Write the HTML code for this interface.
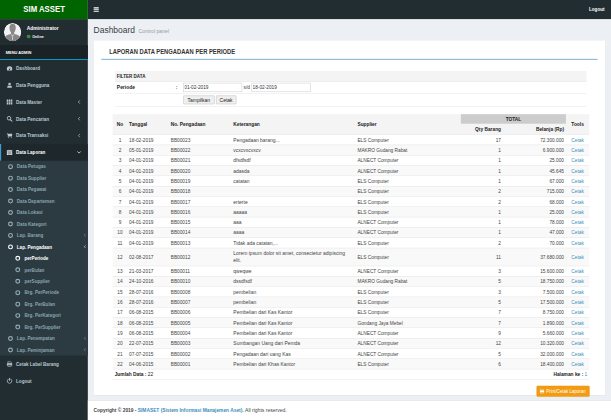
<!DOCTYPE html>
<html><head><meta charset="utf-8">
<style>
*{box-sizing:border-box;}
html,body{margin:0;padding:0;width:611px;height:420px;overflow:hidden;background:#ecf0f5;}
body{font-family:"Liberation Sans",sans-serif;}
#wrap{position:absolute;left:0;top:0;width:1600px;height:1100px;transform:scale(0.381875);transform-origin:0 0;background:#ecf0f5;font-size:12.6px;color:#333;overflow:hidden;}
#logo{position:absolute;left:0;top:0;width:230px;height:50px;background:#006400;color:#fff;font-weight:bold;font-size:22.6px;line-height:50px;text-align:center;}
#logo span{display:inline-block;transform:scaleX(0.9)}
#nav{position:absolute;left:230px;top:0;right:0;height:50px;background:#222d32;}
#burger{position:absolute;left:15px;top:19.3px;width:13.5px;height:12px;}
#burger i{display:block;height:2.3px;background:#fff;margin-bottom:2.2px;border-radius:1px}
#logout{position:absolute;right:17px;top:0;line-height:50px;color:#fff;font-size:12px;font-weight:bold;}
#side{position:absolute;left:0;top:50px;width:230px;bottom:0;background:#222d32;}
#avatar{position:absolute;left:10px;top:10px;width:46px;height:48px;border-radius:50%;overflow:hidden;}
#uname{position:absolute;left:70px;top:17px;color:#fff;font-weight:bold;font-size:12.75px;}
#online{position:absolute;left:70px;top:40px;color:#fff;font-size:9.6px;font-weight:bold}
#online b{display:inline-block;width:9.5px;height:9.5px;border-radius:50%;background:#3c8c3c;margin-right:5px;vertical-align:-1px}
#mhead{position:absolute;left:0;top:68px;width:230px;height:38.8px;background:#1a2226;color:#fff;font-size:10.4px;font-weight:bold;padding:14px 0 0 15px;border-bottom:2.2px solid #00c0ef;}
ul{list-style:none;margin:0;padding:0}
.menu{position:absolute;left:0;width:230px;}
.menu>li{height:44px;line-height:47px;color:#b8c7ce;font-size:12px;font-weight:bold;padding-left:39px;position:relative;border-left:3px solid transparent;}
.menu>li.act{background:#1e282c;color:#fff;border-left-color:#3c9bd8;}
.menu>li .ic{position:absolute;left:14px;top:14px;width:16px;height:16px;line-height:0}
.menu>li .ic svg{width:16px;height:16px;display:block}
.ar{position:absolute;right:19px;top:16px;width:8px;height:12px;}
#sub{background:#2c3b41;position:absolute;left:0;top:371px;width:230px}
#sub li{height:30px;line-height:33px;color:#8aa4af;font-size:12px;padding-left:44px;position:relative;font-weight:bold}
#sub li i{position:absolute;left:20.5px;top:9px;width:13px;height:13px;border:3px solid #93adb8;border-radius:50%;}
#sub li.w{color:#fff}#sub li.w i{border-color:#fff}
#sub li.l2{padding-left:64px}#sub li.l2 i{left:40px}
#sub .ar{right:5px;top:10px;width:6.5px;height:10px}
#h1{position:absolute;left:245px;top:65.8px;font-size:22.2px;color:#3d3d3d;line-height:26px;white-space:nowrap}
#h1 small{font-size:13.5px;color:#999;margin-left:9px;font-weight:normal}
#inner{position:absolute;left:0;top:1px;width:1340px;height:10px}
#box{position:absolute;left:245px;top:105.5px;width:1340px;height:929.5px;background:#fff;box-shadow:0 1px 1px rgba(0,0,0,.1)}
#title{position:absolute;left:41.3px;top:19.5px;font-size:17.4px;transform:scaleX(0.8759);transform-origin:0 0;line-height:20px;font-weight:bold;color:#333;white-space:nowrap}
#tline{position:absolute;left:20px;right:20px;top:47px;height:3px;background:#8fbcd9}
table{border-collapse:collapse;table-layout:fixed}
#filter{position:absolute;left:56px;top:79.5px;width:1235px;font-size:12px}
#filter td{border-bottom:1px solid #ddd;padding:0 5px;white-space:nowrap}
#filter .g{background:#f4f4f4;font-weight:bold;height:27.5px;font-size:11.8px;color:#222}
#filter input{height:24px;border:1px solid #bbb;width:154px;font-size:12.4px;padding:0 2px;font-family:"Liberation Sans",sans-serif;color:#333;margin:0;vertical-align:middle}
.btn0{display:inline-block;height:23px;line-height:21px;border:1px solid #b0b0b0;background:#efefef;border-radius:2px;font-size:13px;color:#222;margin-right:4px;text-align:center;vertical-align:middle}
#main{position:absolute;left:50.3px;top:192.4px;width:1247.7px;font-size:12.5px;color:#444}
#bg div{position:absolute}
#main th{text-align:left;font-weight:bold;padding:0 5px;font-size:12.6px;color:#222;white-space:nowrap}
#main td{height:27px;padding:3px 5px 0;white-space:nowrap;line-height:16px}
#main tr.tall td{height:47px;line-height:20px;padding-top:2px}
#main td:nth-child(4){font-size:13px}
#main td.no{text-align:center;padding:3px 0 0}
#main td.r{text-align:right}#main td.c{text-align:center}
#main a{color:#3c8dbc}
#main th.tot{text-align:center;height:25.6px}
#main th.r{text-align:right}
#main tr.ft td{font-weight:bold;color:#222;height:27.7px;font-size:12.7px}
#print{position:absolute;left:1160px;top:903.3px;width:139px;height:29px;background:#f39c12;border:1px solid #e08e0b;border-radius:3px;color:#fff;font-size:11.6px;line-height:27px;font-weight:normal;white-space:nowrap;padding-left:24.5px}
#print svg{position:absolute;left:7px;top:7px;width:13px;height:13px}
#footer{position:absolute;left:230px;right:0;top:1049px;bottom:0;background:#fff;border-top:1px solid #d2d6de;padding:0 15px;line-height:49px;font-size:12.7px;font-weight:bold;color:#444;white-space:nowrap}
#footer a{color:#3c8dbc}#footer span{font-weight:normal;font-size:13.2px}
</style></head><body>
<div id="wrap">
<div id="logo"><span>SIM ASSET</span></div>
<div id="nav"><div id="burger"><i></i><i></i><i></i></div><div id="logout">Logout</div></div>
<div id="side">
 <div id="avatar"><svg width="46" height="48" viewBox="0 0 45 45" preserveAspectRatio="none"><circle cx="22.5" cy="22.5" r="22.5" fill="#f2f2f2"/><path d="M22.5 2 C28.5 2 31 7 30.5 13 C30 19 27.5 22 26.5 23.5 L26.8 27 C33 28.5 41 30 42.5 36 L44 45 L1 45 L2.5 36 C4 30 12 28.5 18.2 27 L18.5 23.5 C17.5 22 15 19 14.5 13 C14 7 16.5 2 22.5 2Z" fill="#888"/><path d="M18.3 27.5 L21.3 33 L22.5 31.5 L23.7 33 L26.7 27.5 L22.5 31 Z M21.8 33 L21.5 41 L22.5 42 L23.5 41 L23.2 33 L22.5 32.2Z" fill="#f2f2f2"/></svg></div>
 <div id="uname">Administrator</div>
 <div id="online"><b></b>Online</div>
 <div id="mhead">MENU ADMIN</div>
 <ul class="menu" style="top:107px"><li class=""><span class="ic"><svg viewBox="0 0 14 14"><path d="M7 2 A6.5 6.5 0 0 0 .5 8.5 A6.5 6.5 0 0 0 1.4 12 H12.6 A6.5 6.5 0 0 0 13.5 8.5 A6.5 6.5 0 0 0 7 2 Z M7 10.8 A1.4 1.4 0 1 1 7 8 L9.3 5 L8 8.6 A1.4 1.4 0 0 1 7 10.8Z" fill="currentColor" fill-rule="evenodd"/></svg></span>Dashboard</li><li class=""><span class="ic"><svg viewBox="0 0 14 14"><circle cx="7" cy="4.2" r="3" fill="currentColor"/><path d="M1.5 13 Q1.5 7.6 5 7.6 Q7 9 9 7.6 Q12.5 7.6 12.5 13Z" fill="currentColor"/></svg></span>Data Pengguna</li><li class=""><span class="ic"><svg viewBox="0 0 14 14"><g fill="currentColor"><rect x="0" y="1.5" width="4" height="3.2" rx=".6"/><rect x="5" y="1.5" width="4" height="3.2" rx=".6"/><rect x="10" y="1.5" width="4" height="3.2" rx=".6"/><rect x="0" y="5.5" width="4" height="3.2" rx=".6"/><rect x="5" y="5.5" width="4" height="3.2" rx=".6"/><rect x="10" y="5.5" width="4" height="3.2" rx=".6"/><rect x="0" y="9.5" width="4" height="3.2" rx=".6"/><rect x="5" y="9.5" width="4" height="3.2" rx=".6"/><rect x="10" y="9.5" width="4" height="3.2" rx=".6"/></g></svg></span>Data Master<svg class="ar" viewBox="0 0 8 12"><path d="M6.5 1.5 L2 6 L6.5 10.5" fill="none" stroke="currentColor" stroke-width="1.8"/></svg></li><li class=""><span class="ic"><svg viewBox="0 0 14 14"><circle cx="5.8" cy="5.8" r="4.1" fill="none" stroke="currentColor" stroke-width="2"/><path d="M8.8 8.8 L13 13" stroke="currentColor" stroke-width="2.4" stroke-linecap="round"/></svg></span>Data Pencarian<svg class="ar" viewBox="0 0 8 12"><path d="M6.5 1.5 L2 6 L6.5 10.5" fill="none" stroke="currentColor" stroke-width="1.8"/></svg></li><li class=""><span class="ic"><svg viewBox="0 0 14 14"><path d="M0 1.5 H2.6 L3.2 3 H13.6 L12.6 8 H4.2 L4 9.2 H12.4 V10.3 H2.7 L3.3 7.8 L1.9 2.6 H0Z" fill="currentColor"/><circle cx="4.6" cy="11.8" r="1.2" fill="currentColor"/><circle cx="11" cy="11.8" r="1.2" fill="currentColor"/></svg></span>Data Transaksi<svg class="ar" viewBox="0 0 8 12"><path d="M6.5 1.5 L2 6 L6.5 10.5" fill="none" stroke="currentColor" stroke-width="1.8"/></svg></li><li class="act"><span class="ic"><svg viewBox="0 0 14 14"><path d="M.7 2.2 H13.3 V13.3 H.7Z" fill="currentColor"/><rect x="3" y=".5" width="1.8" height="3.4" rx=".8" fill="currentColor" stroke="#1e282c" stroke-width=".5"/><rect x="9.2" y=".5" width="1.8" height="3.4" rx=".8" fill="currentColor" stroke="#1e282c" stroke-width=".5"/><g stroke="#1e282c" stroke-width=".7"><path d="M1.2 5 H12.8 M1.2 7.7 H12.8 M1.2 10.4 H12.8 M4.3 5 V13 M7 5 V13 M9.7 5 V13"/></g></svg></span>Data Laporan<svg class="ar" style="width:12px;height:8px;top:18px;right:17px" viewBox="0 0 12 8"><path d="M1.5 1.5 L6 6 L10.5 1.5" fill="none" stroke="currentColor" stroke-width="1.8"/></svg></li></ul>
 <ul id="sub"><li class=""><i></i>Data Petugas</li><li class=""><i></i>Data Supplier</li><li class=""><i></i>Data Pegawai</li><li class=""><i></i>Data Departemen</li><li class=""><i></i>Data Lokasi</li><li class=""><i></i>Data Kategori</li><li class=""><i></i>Lap. Barang<svg class="ar" viewBox="0 0 8 12"><path d="M6.5 1.5 L2 6 L6.5 10.5" fill="none" stroke="currentColor" stroke-width="1.8"/></svg></li><li class="w"><i></i>Lap. Pengadaan<svg class="ar" viewBox="0 0 8 12"><path d="M6.5 1.5 L2 6 L6.5 10.5" fill="none" stroke="currentColor" stroke-width="1.8"/></svg></li><li class="w l2"><i></i>perPeriode</li><li class="l2"><i></i>perBulan</li><li class="l2"><i></i>perSupplier</li><li class="l2"><i></i>Brg. PerPeriode</li><li class="l2"><i></i>Brg. PerBulan</li><li class="l2"><i></i>Brg. PerKategori</li><li class="l2"><i></i>Brg. PerSupplier</li><li class=""><i></i>Lap. Penempatan<svg class="ar" viewBox="0 0 8 12"><path d="M6.5 1.5 L2 6 L6.5 10.5" fill="none" stroke="currentColor" stroke-width="1.8"/></svg></li><li class=""><i></i>Lap. Peminjaman<svg class="ar" viewBox="0 0 8 12"><path d="M6.5 1.5 L2 6 L6.5 10.5" fill="none" stroke="currentColor" stroke-width="1.8"/></svg></li></ul>
 <ul class="menu" style="top:881px"><li class=""><span class="ic"><svg viewBox="0 0 14 14"><path d="M3.2 .8 H9.2 L10.8 2.4 V5.5 H3.2Z" fill="none" stroke="currentColor" stroke-width="1.2"/><path d="M.6 6.2 Q.6 5.2 1.6 5.2 H12.4 Q13.4 5.2 13.4 6.2 V10.6 H11 V9 H3 V10.6 H.6Z" fill="currentColor"/><path d="M3.2 9.3 H10.8 V12.8 H3.2Z" fill="none" stroke="currentColor" stroke-width="1.2"/></svg></span>Cetak Label Barang</li><li class=""><span class="ic"><svg viewBox="0 0 14 14"><path d="M4.3 3 A5.3 5.3 0 1 0 9.7 3" fill="none" stroke="currentColor" stroke-width="1.9" stroke-linecap="round"/><path d="M7 .9 V6.6" stroke="currentColor" stroke-width="1.9" stroke-linecap="round"/></svg></span>Logout</li></ul>
</div>
<div id="h1">Dashboard<small>Control panel</small></div>
<div id="box"><div id="inner">
 <div id="title">LAPORAN DATA PENGADAAN PER PERIODE</div>
 <div id="tline"></div>
 <table id="filter">
  <colgroup><col style="width:154px"><col style="width:20px"><col></colgroup>
  <tr><td class="g" colspan="3">FILTER DATA</td></tr>
  <tr><td style="width:154px;font-weight:bold;height:31px;font-size:12.9px;color:#222">Periode</td><td style="width:20px;font-weight:bold">:</td><td style="padding:0 0 0 4.5px"><input value="01-02-2019"><span style="display:inline-block;width:25px;text-align:center;font-size:12.5px">s/d</span><input value="18-02-2019"></td></tr>
  <tr><td></td><td></td><td style="padding:0 0 0 4.5px;height:34.5px"><span class="btn0" style="width:82px">Tampilkan</span><span class="btn0" style="width:53px">Cetak</span></td></tr>
 </table>
<div id="bg"><div style="left:50.3px;top:192.4px;width:1247.7px;height:53px;background:#f4f4f4"></div><div style="left:962px;top:192.4px;width:275px;height:25.6px;background:#cccccc"></div><div style="left:50.3px;top:245.4px;width:1247.7px;height:1px;background:#ddd"></div><div style="left:50.3px;top:272.4px;width:1247.7px;height:27px;background:#f9f9f9"></div><div style="left:50.3px;top:272.4px;width:1247.7px;height:1px;background:#ddd"></div><div style="left:50.3px;top:299.4px;width:1247.7px;height:1px;background:#ddd"></div><div style="left:50.3px;top:326.4px;width:1247.7px;height:27px;background:#f9f9f9"></div><div style="left:50.3px;top:326.4px;width:1247.7px;height:1px;background:#ddd"></div><div style="left:50.3px;top:353.4px;width:1247.7px;height:1px;background:#ddd"></div><div style="left:50.3px;top:380.4px;width:1247.7px;height:27px;background:#f9f9f9"></div><div style="left:50.3px;top:380.4px;width:1247.7px;height:1px;background:#ddd"></div><div style="left:50.3px;top:407.4px;width:1247.7px;height:1px;background:#ddd"></div><div style="left:50.3px;top:434.4px;width:1247.7px;height:27px;background:#f9f9f9"></div><div style="left:50.3px;top:434.4px;width:1247.7px;height:1px;background:#ddd"></div><div style="left:50.3px;top:461.4px;width:1247.7px;height:1px;background:#ddd"></div><div style="left:50.3px;top:488.4px;width:1247.7px;height:27px;background:#f9f9f9"></div><div style="left:50.3px;top:488.4px;width:1247.7px;height:1px;background:#ddd"></div><div style="left:50.3px;top:515.4px;width:1247.7px;height:1px;background:#ddd"></div><div style="left:50.3px;top:542.4px;width:1247.7px;height:47px;background:#f9f9f9"></div><div style="left:50.3px;top:542.4px;width:1247.7px;height:1px;background:#ddd"></div><div style="left:50.3px;top:589.4px;width:1247.7px;height:1px;background:#ddd"></div><div style="left:50.3px;top:616.4px;width:1247.7px;height:27px;background:#f9f9f9"></div><div style="left:50.3px;top:616.4px;width:1247.7px;height:1px;background:#ddd"></div><div style="left:50.3px;top:643.4px;width:1247.7px;height:1px;background:#ddd"></div><div style="left:50.3px;top:670.4px;width:1247.7px;height:27px;background:#f9f9f9"></div><div style="left:50.3px;top:670.4px;width:1247.7px;height:1px;background:#ddd"></div><div style="left:50.3px;top:697.4px;width:1247.7px;height:1px;background:#ddd"></div><div style="left:50.3px;top:724.4px;width:1247.7px;height:27px;background:#f9f9f9"></div><div style="left:50.3px;top:724.4px;width:1247.7px;height:1px;background:#ddd"></div><div style="left:50.3px;top:751.4px;width:1247.7px;height:1px;background:#ddd"></div><div style="left:50.3px;top:778.4px;width:1247.7px;height:27px;background:#f9f9f9"></div><div style="left:50.3px;top:778.4px;width:1247.7px;height:1px;background:#ddd"></div><div style="left:50.3px;top:805.4px;width:1247.7px;height:1px;background:#ddd"></div><div style="left:50.3px;top:832.4px;width:1247.7px;height:27px;background:#f9f9f9"></div><div style="left:50.3px;top:832.4px;width:1247.7px;height:1px;background:#ddd"></div><div style="left:50.3px;top:859.4px;width:1247.7px;height:1px;background:#ddd"></div><div style="left:50.3px;top:887.1px;width:1247.7px;height:1px;background:#ddd"></div></div>
 <table id="main">
  <colgroup><col style="width:37.7px"><col style="width:109px"><col style="width:164px"><col style="width:325px"><col style="width:276px"><col style="width:110px"><col style="width:165px"><col style="width:61px"></colgroup>
  <tr><th rowspan="2" style="text-align:center;padding:0">No</th><th rowspan="2">Tanggal</th><th rowspan="2">No. Pengadaan</th><th rowspan="2">Keterangan</th><th rowspan="2">Supplier</th><th colspan="2" class="tot">TOTAL</th><th rowspan="2" style="text-align:center">Tools</th></tr>
  <tr><th class="r" style="height:27.4px;padding-top:3px">Qty Barang</th><th class="r" style="padding-top:3px">Belanja (Rp)</th></tr>
  <tr><td class="no">1</td><td>18-02-2019</td><td>BB00023</td><td>Pengadaan barang...</td><td>ELS Computer</td><td class="r">17</td><td class="r">72.300.000</td><td class="c"><a>Cetak</a></td></tr>
<tr><td class="no">2</td><td>05-01-2019</td><td>BB00022</td><td>vcxcvxcvxcv</td><td>MAKRO Gudang Rabat</td><td class="r">1</td><td class="r">6.900.000</td><td class="c"><a>Cetak</a></td></tr>
<tr><td class="no">3</td><td>04-01-2019</td><td>BB00021</td><td>dfsdfsdf</td><td>ALNECT Computer</td><td class="r">1</td><td class="r">25.000</td><td class="c"><a>Cetak</a></td></tr>
<tr><td class="no">4</td><td>04-01-2019</td><td>BB00020</td><td>adasda</td><td>ALNECT Computer</td><td class="r">1</td><td class="r">45.645</td><td class="c"><a>Cetak</a></td></tr>
<tr><td class="no">5</td><td>04-01-2019</td><td>BB00019</td><td>catatan</td><td>ELS Computer</td><td class="r">1</td><td class="r">67.000</td><td class="c"><a>Cetak</a></td></tr>
<tr><td class="no">6</td><td>04-01-2019</td><td>BB00018</td><td></td><td>ELS Computer</td><td class="r">2</td><td class="r">715.000</td><td class="c"><a>Cetak</a></td></tr>
<tr><td class="no">7</td><td>04-01-2019</td><td>BB00017</td><td>erterte</td><td>ELS Computer</td><td class="r">2</td><td class="r">68.000</td><td class="c"><a>Cetak</a></td></tr>
<tr><td class="no">8</td><td>04-01-2019</td><td>BB00016</td><td>aaaaa</td><td>ELS Computer</td><td class="r">1</td><td class="r">25.000</td><td class="c"><a>Cetak</a></td></tr>
<tr><td class="no">9</td><td>04-01-2019</td><td>BB00015</td><td>aaa</td><td>ALNECT Computer</td><td class="r">1</td><td class="r">78.000</td><td class="c"><a>Cetak</a></td></tr>
<tr><td class="no">10</td><td>04-01-2019</td><td>BB00014</td><td>aaaa</td><td>ALNECT Computer</td><td class="r">1</td><td class="r">47.000</td><td class="c"><a>Cetak</a></td></tr>
<tr><td class="no">11</td><td>04-01-2019</td><td>BB00013</td><td>Tidak ada catatan,...</td><td>ELS Computer</td><td class="r">2</td><td class="r">70.000</td><td class="c"><a>Cetak</a></td></tr>
<tr class="tall"><td class="no">12</td><td>02-08-2017</td><td>BB00012</td><td>Lorem ipsum dolor sit amet, consectetur adipiscing<br>elit.</td><td>ELS Computer</td><td class="r">11</td><td class="r">37.680.000</td><td class="c"><a>Cetak</a></td></tr>
<tr><td class="no">13</td><td>21-03-2017</td><td>BB00011</td><td>qweqwe</td><td>ALNECT Computer</td><td class="r">3</td><td class="r">15.600.000</td><td class="c"><a>Cetak</a></td></tr>
<tr><td class="no">14</td><td>24-10-2016</td><td>BB00010</td><td>dssdfsdf</td><td>MAKRO Gudang Rabat</td><td class="r">5</td><td class="r">18.750.000</td><td class="c"><a>Cetak</a></td></tr>
<tr><td class="no">15</td><td>28-07-2016</td><td>BB00008</td><td>pembelian</td><td>ELS Computer</td><td class="r">3</td><td class="r">7.500.000</td><td class="c"><a>Cetak</a></td></tr>
<tr><td class="no">16</td><td>28-07-2016</td><td>BB00007</td><td>pembelian</td><td>ELS Computer</td><td class="r">5</td><td class="r">17.500.000</td><td class="c"><a>Cetak</a></td></tr>
<tr><td class="no">17</td><td>06-08-2015</td><td>BB00006</td><td>Pembelian dari Kas Kantor</td><td>ELS Computer</td><td class="r">7</td><td class="r">8.750.000</td><td class="c"><a>Cetak</a></td></tr>
<tr><td class="no">18</td><td>06-08-2015</td><td>BB00005</td><td>Pembelian dari Kas Kantor</td><td>Gondang Jaya Mebel</td><td class="r">7</td><td class="r">1.890.000</td><td class="c"><a>Cetak</a></td></tr>
<tr><td class="no">19</td><td>06-08-2015</td><td>BB00004</td><td>Pembelian dari Kas Kantor</td><td>ALNECT Computer</td><td class="r">9</td><td class="r">5.660.000</td><td class="c"><a>Cetak</a></td></tr>
<tr><td class="no">20</td><td>22-07-2015</td><td>BB00003</td><td>Sumbangan Uang dari Pemda</td><td>ALNECT Computer</td><td class="r">12</td><td class="r">10.320.000</td><td class="c"><a>Cetak</a></td></tr>
<tr><td class="no">21</td><td>07-07-2015</td><td>BB00002</td><td>Pengadaan dari uang Kas</td><td>ALNECT Computer</td><td class="r">5</td><td class="r">32.000.000</td><td class="c"><a>Cetak</a></td></tr>
<tr><td class="no">22</td><td>04-06-2015</td><td>BB00001</td><td>Pembelian dari Khas Kantor</td><td>ELS Computer</td><td class="r">6</td><td class="r">18.400.000</td><td class="c"><a>Cetak</a></td></tr>
  <tr class="ft"><td colspan="4">Jumlah Data : <span style="font-weight:normal">22</span></td><td colspan="4" class="r">Halaman ke : <a style="font-weight:normal">1</a></td></tr>
 </table>
 <div id="print"><svg viewBox="0 0 14 14"><path d="M3.2 .8 H9.2 L10.8 2.4 V5.5 H3.2Z" fill="none" stroke="currentColor" stroke-width="1.2"/><path d="M.6 6.2 Q.6 5.2 1.6 5.2 H12.4 Q13.4 5.2 13.4 6.2 V10.6 H11 V9 H3 V10.6 H.6Z" fill="currentColor"/><path d="M3.2 9.3 H10.8 V12.8 H3.2Z" fill="none" stroke="currentColor" stroke-width="1.2"/></svg>Print/Cetak Laporan</div>
</div></div>
<div id="footer">Copyright &copy; 2019 - <a>SIMASET (Sistem Informasi Manajemen Aset).</a> <span>All rights reserved.</span></div>
</div>
</body></html>
